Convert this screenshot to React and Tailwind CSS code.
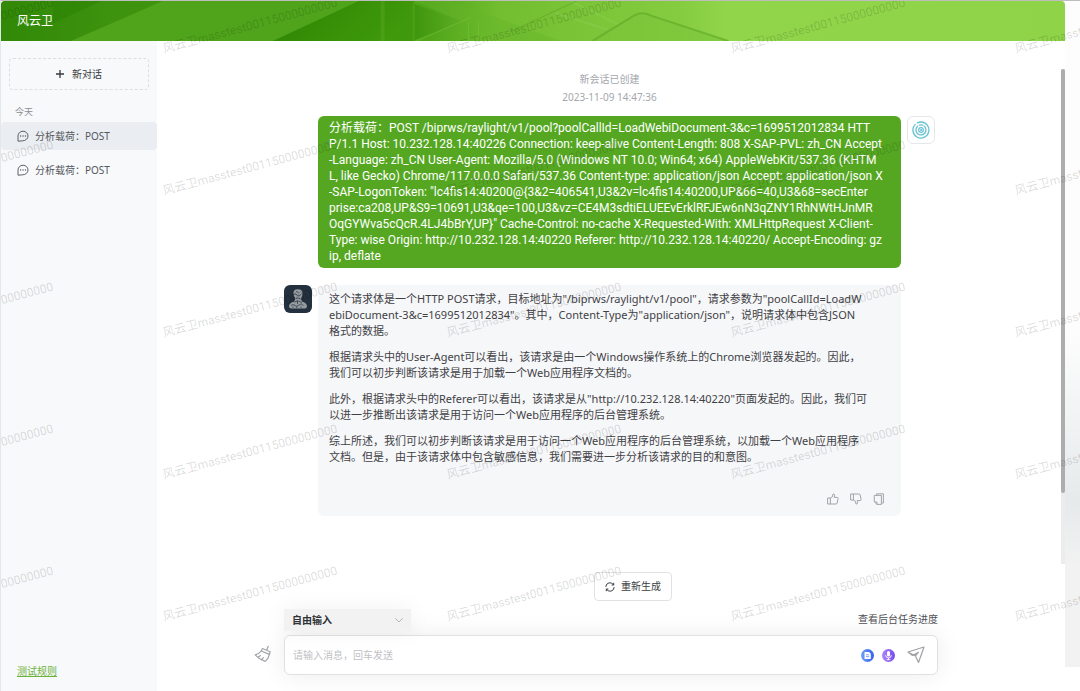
import React from "react";

const FONT = "font-['Noto_Sans','Noto_Sans_CJK_SC',sans-serif]";
const REQUEST_FONT = "font-['Roboto','Noto_Sans_CJK_SC',sans-serif]";

const REQUEST = `分析载荷：POST /biprws/raylight/v1/pool?poolCallId=LoadWebiDocument-3&c=1699512012834 HTT
P/1.1 Host: 10.232.128.14:40226 Connection: keep-alive Content-Length: 808 X-SAP-PVL: zh_CN Accept
-Language: zh_CN User-Agent: Mozilla/5.0 (Windows NT 10.0; Win64; x64) AppleWebKit/537.36 (KHTM
L, like Gecko) Chrome/117.0.0.0 Safari/537.36 Content-type: application/json Accept: application/json X
-SAP-LogonToken: "lc4fis14:40200@{3&2=406541,U3&2v=lc4fis14:40200,UP&66=40,U3&68=secEnter
prise:ca208,UP&S9=10691,U3&qe=100,U3&vz=CE4M3sdtiELUEEvErklRFJEw6nN3qZNY1RhNWtHJnMR
OqGYWva5cQcR.4LJ4bBrY,UP}" Cache-Control: no-cache X-Requested-With: XMLHttpRequest X-Client-
Type: wise Origin: http://10.232.128.14:40220 Referer: http://10.232.128.14:40220/ Accept-Encoding: gz
ip, deflate`;

const ANSWER = [
  `这个请求体是一个HTTP POST请求，目标地址为"/biprws/raylight/v1/pool"，请求参数为"poolCallId=LoadW
ebiDocument-3&c=1699512012834"。其中，Content-Type为"application/json"，说明请求体中包含JSON
格式的数据。`,
  `根据请求头中的User-Agent可以看出，该请求是由一个Windows操作系统上的Chrome浏览器发起的。因此，
我们可以初步判断该请求是用于加载一个Web应用程序文档的。`,
  `此外，根据请求头中的Referer可以看出，该请求是从"http://10.232.128.14:40220"页面发起的。因此，我们可
以进一步推断出该请求是用于访问一个Web应用程序的后台管理系统。`,
  `综上所述，我们可以初步判断该请求是用于访问一个Web应用程序的后台管理系统，以加载一个Web应用程序
文档。但是，由于该请求体中包含敏感信息，我们需要进一步分析该请求的目的和意图。`,
];

function Watermark() {
  const marks = [];
  for (let row = 0; row < 5; row++) {
    for (let col = 0; col < 5; col++) {
      marks.push([-121 + col * 284, 52 + row * 142]);
    }
  }
  return (
    <svg className="pointer-events-none absolute inset-0 h-full w-full font-['Roboto','Noto_Sans_CJK_SC',sans-serif]" aria-hidden="true">
      {marks.map(([x, y]) => (
        <text
          key={`${x}-${y}`}
          transform={`translate(${x} ${y}) rotate(-15)`}
          className="fill-black/15 text-[12px]"
        >
          风云卫masstest00115000000000
        </text>
      ))}
    </svg>
  );
}

function HeaderArt() {
  return (
    <svg className="absolute inset-0 h-full w-full" viewBox="0 0 1065 39" preserveAspectRatio="none" aria-hidden="true">
      <defs>
        <linearGradient id="base" x1="0" x2="1" y1="0" y2="0">
          <stop offset="0" stopColor="#328a08" />
          <stop offset="0.1" stopColor="#469a14" />
          <stop offset="0.3" stopColor="#57a81f" />
          <stop offset="0.4" stopColor="#4fa418" />
          <stop offset="0.47" stopColor="#72be30" />
          <stop offset="0.64" stopColor="#86cc40" />
          <stop offset="0.68" stopColor="#90d54a" />
          <stop offset="1" stopColor="#8fd348" />
        </linearGradient>
        <linearGradient id="dark" x1="0" x2="1" y1="0" y2="0.3">
          <stop offset="0" stopColor="#2d8403" />
          <stop offset="1" stopColor="#3f990a" />
        </linearGradient>
        <linearGradient id="wedge" x1="0" x2="1" y1="0" y2="0">
          <stop offset="0" stopColor="#3e960c" />
          <stop offset="1" stopColor="#5fae24" />
        </linearGradient>
      </defs>
      <rect width="1065" height="39" fill="url(#base)" />
      <path d="M0 0H170L70 39H0Z" fill="#2f8706" opacity="0.4" />
      <path d="M52 0H100L52 22Z" fill="#2a7f02" opacity="0.5" />
      <path d="M162 0L70 39H272L358 0Z" fill="#4fa41b" />
      <path d="M358 0L272 39H414V0Z" fill="url(#dark)" />
      <path d="M380 0h4v39h-4zM412 0h4v39h-4z" fill="#63ad2a" opacity="0.35" />
      <path d="M414 3L462 20L414 38Z" fill="url(#wedge)" />
      <path d="M414 0H450L560 39H500L462 20Z" fill="#67b52a" opacity="0.4" />
      <path d="M416 39L470 16M468 20v19M478 20v19" stroke="#80c847" strokeWidth="1" opacity="0.4" fill="none" />
      <path d="M555 12L608 28M570 0L620 24" stroke="#8ad050" strokeWidth="2" opacity="0.5" fill="none" />
      <path d="M576 0L510 30" stroke="#5da827" strokeWidth="1" opacity="0.6" fill="none" />
      <path d="M592 39L634 14Q642 10 650 14L728 39Z" fill="#7cc53a" opacity="0.6" />
      <path d="M592 39L634 14Q642 10 650 14L728 39" stroke="#5da827" strokeWidth="2" opacity="0.6" fill="none" />
    </svg>
  );
}

const stroke = { fill: "none", stroke: "currentColor", strokeLinecap: "round", strokeLinejoin: "round" };

function ChatIcon() {
  return (
    <svg className="size-3 shrink-0 text-[#5c6066]" viewBox="0 0 12 12" {...stroke} strokeWidth="1">
      <path d="M1 10.8V6a5 4.8 0 1 1 5 4.8Z" />
      <path d="M3.6 6h.1M6 6h.1M8.4 6h.1" strokeWidth="1.3" />
    </svg>
  );
}

function BroomIcon() {
  return (
    <svg className="size-[18px]" viewBox="0 0 18 18" {...stroke} strokeWidth="1.2">
      <path d="M14.2 1.2L12.8 5M8.4 3.5L16.2 6.8L15.4 9.4L7.2 6Z" />
      <path d="M7.2 6Q5 9 1.2 9.8Q5 14.2 11.2 16.4Q14.6 13.6 15.4 9.4M4 12.4L6.4 10.6M7.4 14.8L9.4 12.6" />
    </svg>
  );
}

function ThumbIcon({ down }) {
  return (
    <svg className={down ? "size-3 -scale-y-100" : "size-3"} viewBox="0 0 12 12" {...stroke} strokeWidth="1">
      <path d="M1 5H3.4V11H1ZM3.4 5L5.4 3.8L6 1Q7.8 .8 7.6 2.6L7.2 4.4H10.2Q11.3 4.5 11.1 5.6L10.2 10Q10 11 9 11H3.4" />
    </svg>
  );
}

function CopyIcon() {
  return (
    <svg className="size-3" viewBox="0 0 12 12" {...stroke} strokeWidth="1">
      <path d="M3.6 2.4V.8H10.4V10H8.6M1.6 2.4H8.4V11.4H4L1.6 9ZM1.8 9H4V11.2" />
    </svg>
  );
}

function AgentAvatar() {
  return (
    <svg className="size-7 shrink-0 rounded-md bg-[#23303d]" viewBox="0 0 28 28" role="img" aria-label="助手">
      <g fill="#959b9f">
        <path d="M9.500 8.500Q9 4.500 13.500 4.300Q18.500 4 18.500 8.500Q18.700 11.500 17 13.200L18 16.500Q22.500 17.500 23 21Q23 24 20 23.500H8Q5 24 5 21Q5.500 17.500 10 16.700L11.500 13.500Q9.500 11 9.500 8.500Z" />
      </g>
      <g fill="none" stroke="#23303d" strokeWidth=".7">
        <path d="M10 9.500Q12 8 13 10T17.500 9M12 6.500L14.500 7.500M12 13.500Q14 12 16.500 14" />
        <path d="M10.500 17Q14 14.500 18 17.500M7 20.500Q9 18.500 11 20.500T15 20T19.500 20.500M13.500 16V19M9 23V21.500M12.500 23L13 21.500M17 23V21.500" />
      </g>
    </svg>
  );
}

function UserAvatar() {
  return (
    <span className="flex size-7 shrink-0 items-center justify-center rounded-md border border-[#e6e7e9] bg-white">
      <svg className="size-[18px]" viewBox="0 0 18 18" fill="none" stroke="#68c3d3" strokeLinecap="round" role="img" aria-label="用户">
        <path d="M3.200 3.400A8 8 0 1 0 9 1Q7 1 5.400 1.900" strokeWidth="1.300" />
        <path d="M5.600 5.200A5 5 0 1 0 12 5M7.500 4.200Q9 3.700 10.400 4.200" strokeWidth="1.300" />
        <circle cx="9" cy="9" r="2.300" strokeWidth="1.200" />
        <circle cx="9" cy="9" r=".6" fill="#68c3d3" />
      </svg>
    </span>
  );
}

function HistoryItem({ active }) {
  return (
    <button
      type="button"
      className={`flex h-7 w-full items-center gap-[6px] rounded-sm pl-4 text-[10px] text-[#55585d] ${active ? "bg-[#eaedf2]" : ""}`}
    >
      <ChatIcon />
      分析载荷：POST
    </button>
  );
}

function Composer() {
  return (
    <div className="flex items-end gap-3 pl-[97px] pr-[123px]">
      <button type="button" aria-label="清空会话" className="mb-3 text-[#a3a5a8]">
        <BroomIcon />
      </button>
      <div className="min-w-0 flex-1">
        <div className="flex h-[26px] items-start justify-between">
          <label className="relative flex h-[22px] w-[127px] items-center bg-[#f2f2f2] shadow-[0_0_24px_rgba(0,0,0,0.06)]">
            <span className="sr-only">输入模式</span>
            <select className="h-full w-full appearance-none bg-transparent px-2 text-[10px] font-bold text-[#303236] outline-none">
              <option>自由输入</option>
            </select>
            <svg className="pointer-events-none absolute right-2 size-2 text-[#b4b6b9]" viewBox="0 0 8 8" {...stroke}>
              <path d="M.5 2.500L4 6L7.500 2.500" />
            </svg>
          </label>
          <a href="#tasks" className="text-[10px] leading-[20px] text-[#4e5055]">查看后台任务进度</a>
        </div>
        <div className="flex h-10 items-center rounded-md border border-[#e0e1e3] bg-white px-2 shadow-[0_0_24px_rgba(0,0,0,0.08)]">
          <input
            aria-label="消息"
            placeholder="请输入消息，回车发送"
            className="min-w-0 flex-1 bg-transparent text-[10px] outline-none placeholder:text-[#bfc1c5]"
          />
          <button type="button" aria-label="文档" className="mr-2">
            <svg className="size-[13px]" viewBox="0 0 13 13">
              <defs><linearGradient id="doc"><stop stopColor="#6d9ff8" /><stop offset="1" stopColor="#3260ee" /></linearGradient></defs>
              <circle cx="6.500" cy="6.500" r="6.500" fill="url(#doc)" />
              <path d="M3.500 3H8L9.800 4.800V10H3.500Z" fill="#fff" />
              <path d="M5 5.800H8.200M5 7.600H8.200" stroke="#6f9af5" strokeWidth=".9" />
            </svg>
          </button>
          <button type="button" aria-label="语音输入" className="mr-3">
            <svg className="size-[13px]" viewBox="0 0 13 13">
              <defs><linearGradient id="mic"><stop stopColor="#ae83f8" /><stop offset="1" stopColor="#7549ed" /></linearGradient></defs>
              <circle cx="6.500" cy="6.500" r="6.500" fill="url(#mic)" />
              <rect x="5" y="2" width="3" height="5.600" rx="1.500" fill="#fff" />
              <path d="M3.600 6.200Q3.800 8.900 6.500 8.900T9.400 6.200M6.500 9V10.600M4.600 10.700H8.400" fill="none" stroke="#fff" strokeWidth=".9" />
            </svg>
          </button>
          <button type="button" aria-label="发送" className="mr-1 text-[#a0a2a5]">
            <svg className="size-[18px]" viewBox="0 0 18 18" {...stroke} strokeWidth="1.200">
              <path d="M1 6L17 1L11.500 16.500L8.500 10ZM1 6L5.500 9.500L11.500 6.200L8.500 10" />
            </svg>
          </button>
        </div>
      </div>
    </div>
  );
}

export default function App() {
  return (
    <div className={`relative flex min-h-screen overflow-hidden border-l border-t border-l-[#e3e6ea] border-t-[#bdbdbd] bg-white ${FONT}`}>
      <div className="flex min-w-0 flex-1 flex-col">
        <header className="relative flex h-10 items-center overflow-hidden rounded-t-sm pl-4">
          <HeaderArt />
          <h1 className="relative text-[12px] text-white">风云卫</h1>
        </header>
        <div className="flex flex-1">
          <aside className="flex w-[156px] shrink-0 flex-col bg-[#f8f9fb]">
            <button
              type="button"
              className="mx-2 mt-[17px] flex h-8 items-center justify-center gap-2 rounded-sm border border-dashed border-[#dcdee1] text-[10px] text-[#36383c]"
            >
              <svg className="size-2" viewBox="0 0 8 8" stroke="currentColor" strokeWidth="1.300"><path d="M4 0V8M0 4H8" /></svg>
              新对话
            </button>
            <h2 className="mb-[3px] mt-[15px] pl-[14px] text-[9px] leading-[14px] text-[#8b8e93]">今天</h2>
            <nav className="flex flex-col gap-[6px]">
              <HistoryItem active />
              <HistoryItem />
            </nav>
            <a href="#rules" className="mb-3 mt-auto pl-4 text-[10px] leading-[16px] text-[#6bb33a] underline">测试规则</a>
          </aside>
          <main className="flex min-w-0 flex-1">
            <div className="flex min-w-0 flex-1 flex-col">
              <div className="pl-[127px] pr-[126px] pt-[29px]">
                <p className="text-center text-[10px] leading-[18px] text-[#a4a7ad]">新会话已创建<br />2023-11-09 14:47:36</p>
                <div className="mt-[10px] flex items-start gap-[6px] pl-[34px]">
                  <p className={`min-w-0 flex-1 whitespace-pre rounded-md bg-[#55a722] px-[11px] py-1 text-[12px] leading-[16px] text-white ${REQUEST_FONT}`}>{REQUEST}</p>
                  <UserAvatar />
                </div>
                <div className="mt-[17px] flex items-start gap-[6px] pr-[34px]">
                  <AgentAvatar />
                  <article className="min-w-0 flex-1 rounded-md bg-[#f6f7f9] px-[11px] pb-2 pt-[6px] text-[11px] leading-[16px] text-[#3f4145]">
                    <div className="flex flex-col gap-[10px]">
                      {ANSWER.map((text) => <p key={text} className="whitespace-pre">{text}</p>)}
                    </div>
                    <div className="mr-[5px] mt-7 flex justify-end gap-[11px] pb-[3px] text-[#a2a4a8]">
                      <button type="button" aria-label="赞"><ThumbIcon /></button>
                      <button type="button" aria-label="踩"><ThumbIcon down /></button>
                      <button type="button" aria-label="复制"><CopyIcon /></button>
                    </div>
                  </article>
                </div>
              </div>
              <div className="mt-auto pb-4">
                <div className="mb-2 flex justify-center pl-[48px]">
                  <button type="button" className="flex h-[29px] items-center gap-[6px] rounded-sm border border-[#e1e2e4] px-[10px] text-[10px] text-[#3b3d41]">
                    <svg className="size-[10px]" viewBox="0 0 10 10" {...stroke} strokeWidth="1"><path d="M.8 4.500A4.200 4.200 0 0 1 8.600 2.800M8.700 1.200V3H7M9.200 5.500A4.200 4.200 0 0 1 1.400 7.200M1.300 8.800V7H3" /></svg>
                    重新生成
                  </button>
                </div>
                <Composer />
              </div>
            </div>
            <div className="mt-7 h-[495px] w-1 shrink-0 bg-[#ececec]">
              <div className="h-[424px] rounded-full bg-[#adadad]" />
            </div>
          </main>
        </div>
      </div>
      <div className="mb-6 w-[15px] shrink-0 bg-linear-to-b from-[#fdfdfd] from-50% via-[#e6eaeb] via-75% to-[#f2f2f2] to-85%" />
      <Watermark />
    </div>
  );
}
